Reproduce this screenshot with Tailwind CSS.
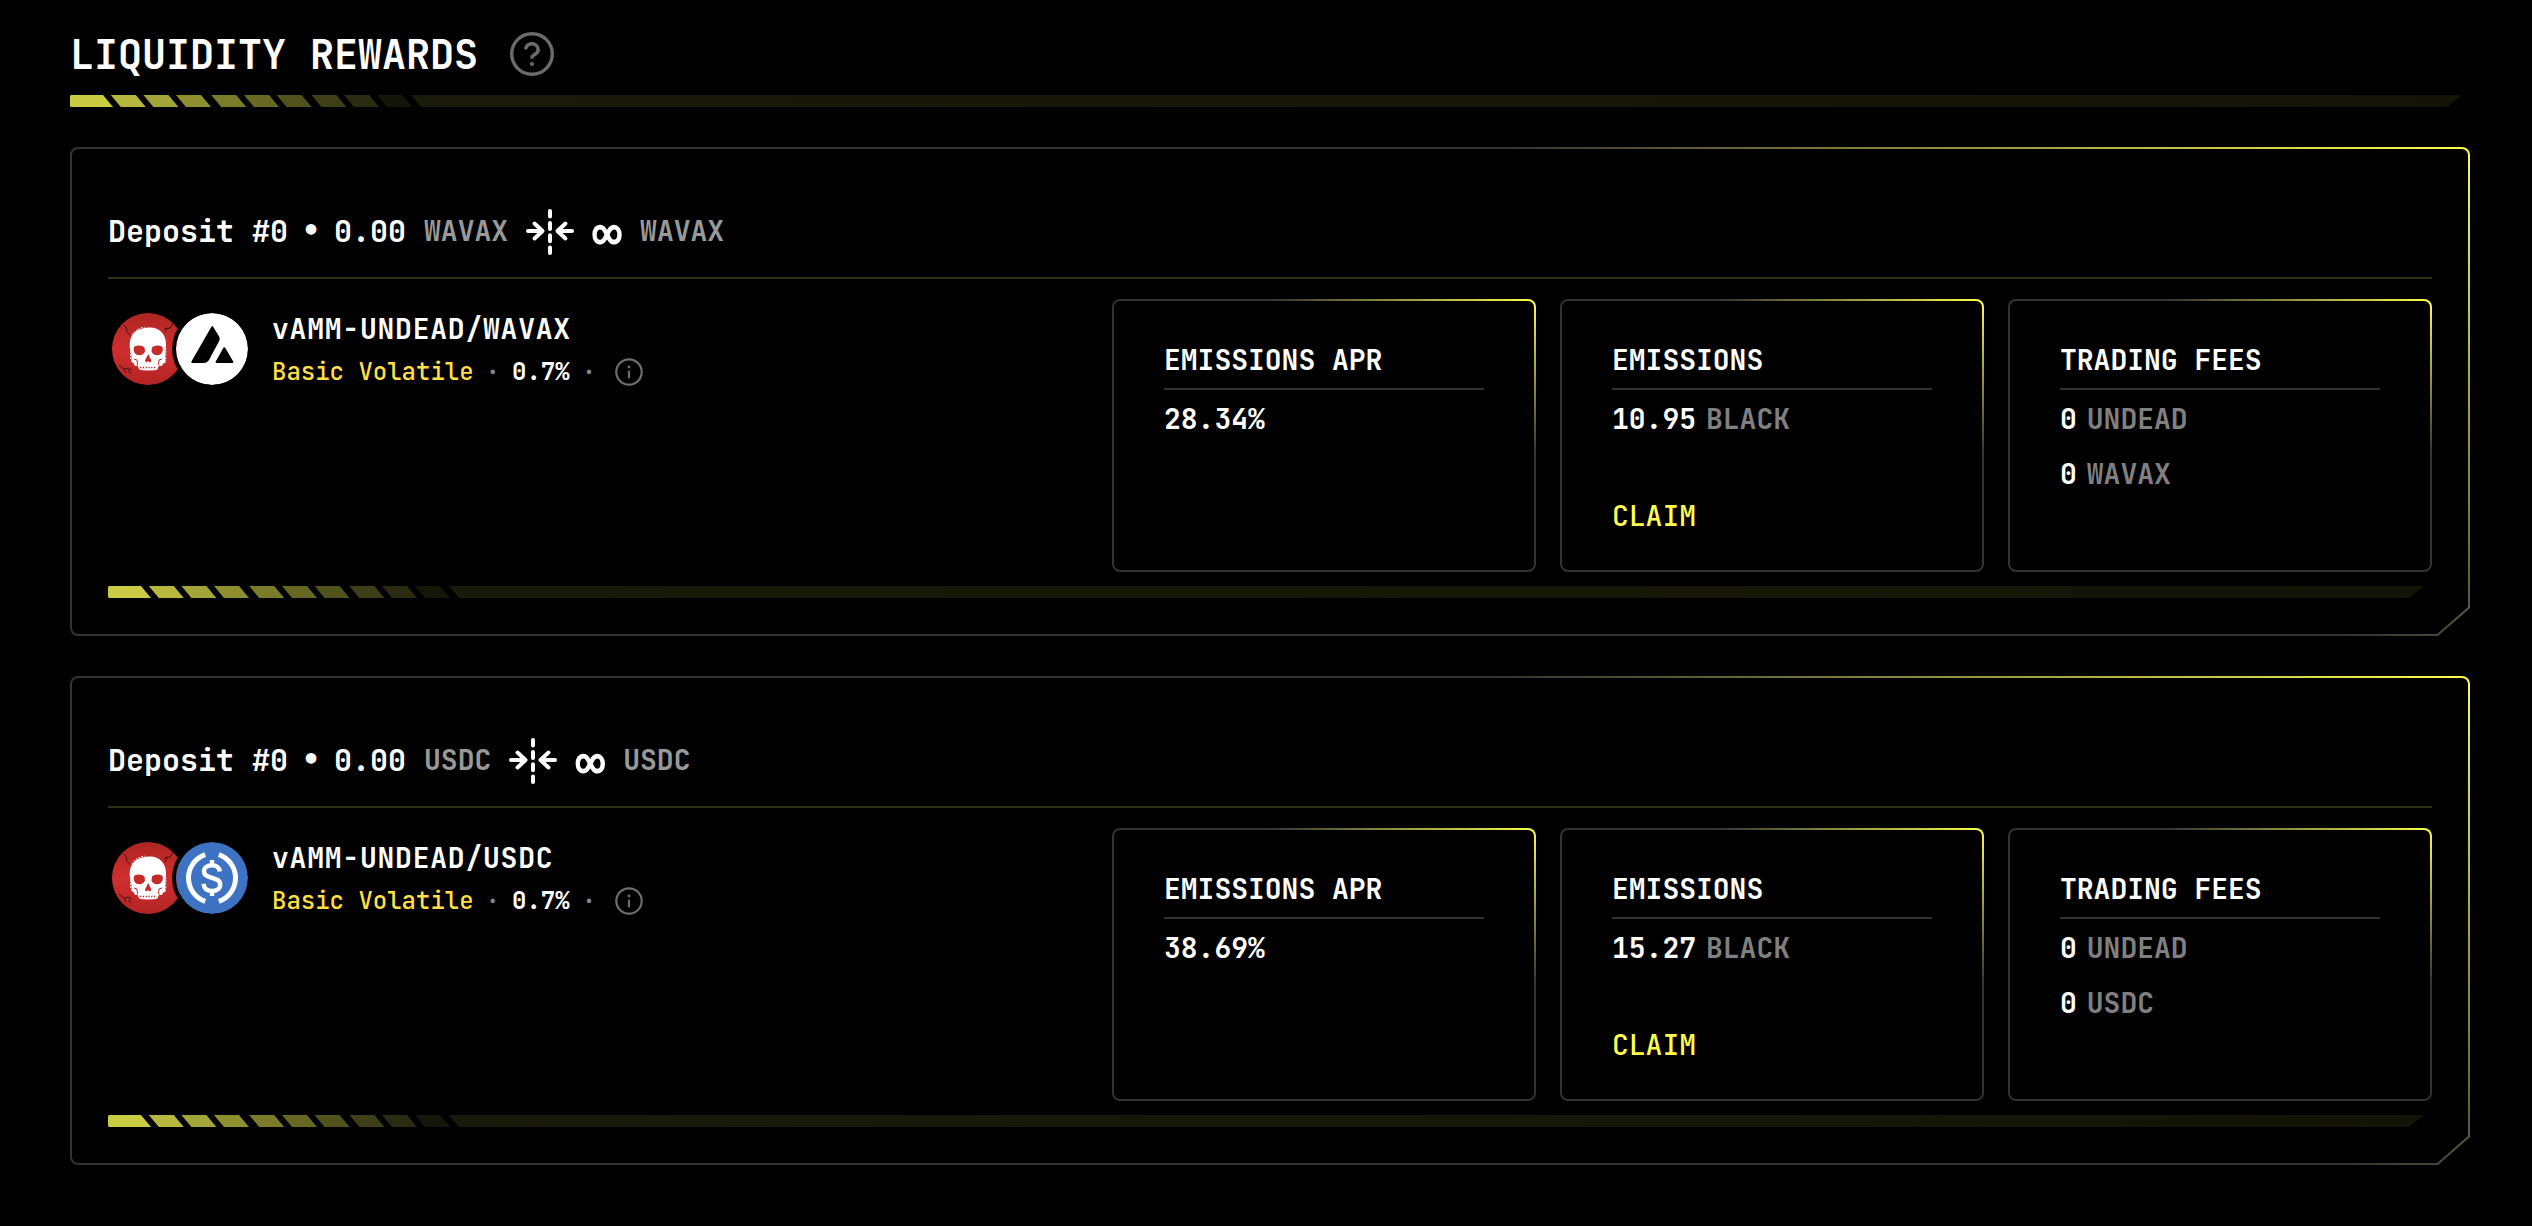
<!DOCTYPE html>
<html lang="en">
<head>
<meta charset="utf-8">
<title>Liquidity Rewards</title>
<script src="https://cdn.jsdelivr.net/npm/@tailwindcss/browser@4"></script>
</head>
<body class="min-h-screen bg-black font-['JetBrains_Mono','DejaVu_Sans_Mono',monospace] text-white">
<svg class="absolute h-0 w-0" aria-hidden="true">
  <defs>
    <linearGradient id="blood" x1="0" y1="0" x2="0" y2="1"><stop offset="0" stop-color="#ad2622"/><stop offset=".5" stop-color="#d12e2e"/><stop offset="1" stop-color="#b32424"/></linearGradient>
    <symbol id="stripes" viewBox="0 0 352 12">
      <path fill="#c9cc43" d="M1 0H33L43 12H1L0 11V1z"/>
      <path fill="#b5b83d" d="M40.8 0h25l10 12h-25z"/>
      <path fill="#a2a537" d="M73.4 0h25l10 12h-25z"/>
      <path fill="#8e9030" d="M106 0h25l10 12h-25z"/>
      <path fill="#7a7c2a" d="M141.2 0h25l10 12h-25z"/>
      <path fill="#666824" d="M174 0h25l10 12h-25z"/>
      <path fill="#52531c" d="M206.6 0h25l10 12h-25z"/>
      <path fill="#3e3f17" d="M241.4 0h25l10 12h-25z"/>
      <path fill="#2a2b10" d="M274 0h25l10 12h-25z"/>
      <path fill="#15160a" d="M307 0h25l10 12h-25z"/>
    </symbol>
    <symbol id="range" viewBox="0 0 48 46">
      <g fill="none" stroke="#fff" stroke-width="4" stroke-linecap="round" stroke-linejoin="round">
        <path d="M24 2v5.500M24 14v6M24 26.300v6M24 38.500v5.500M2 22H16M8.500 14.500L16.500 22L8.500 29.500M46 22H32M39.500 14.500L31.500 22L39.500 29.500"/>
      </g>
    </symbol>
    <symbol id="info" viewBox="0 0 28 28">
      <g fill="none" stroke="#6e6e6e" stroke-width="2.200" stroke-linecap="round"><circle cx="14" cy="14" r="12.700"/><path d="M14 13.500v6"/></g><circle cx="14" cy="9" r="1.400" fill="#6e6e6e"/>
    </symbol>
    <symbol id="skull" viewBox="0 0 72 72">
      <circle cx="36" cy="36" r="36" fill="url(#blood)"/>
      <path d="M12 12l3 4-1 2 4 4M61 10l-2 4-5 3-1 3M56 15l-4 1M7 52l5 4 4-1 4 2M12 56l2 4M16 57l3 4" fill="none" stroke="#4a1213" stroke-width="1"/>
      <path d="M36 14.500C47 13.500 54 21 54 31c0 5-.5 8-.8 12l.5 6.500-2.500 1-1.200 2.500-3-.5-1.500 4-3 .8-6.500.2-6-.2-2.800-.8-1.700-4-2.500.5-1.500-3-2-1V43c-.8-3-2-8-1.800-12C18 21 25 15 36 14.500z" fill="#fff"/>
      <path d="M18.500 46v-10M53.800 46V35M20 22C23 17 27 15 33 14" fill="none" stroke="#f4d6d6" stroke-width="1" stroke-dasharray="2 1"/>
      <path d="M22 34c3-2.200 8-2 10.500.5l.5 4c-1.500 3.500-4 4-7 3.500-3.500-.5-5-4-4-8zM50.500 34c-3-2.200-8-2-10.500.5l-.5 4c1.500 3.500 4 4 7 3.500 3.500-.5 5-4 4-8zM36.200 41l-3.200 6.500 1 2 2.200-1.200 2.200 1.200 1-2z" fill="#c62b2b"/>
      <path d="M28 54.500h16.500" fill="none" stroke="#b02727" stroke-width="1.600" stroke-dasharray="1.200 1.600"/>
      <path d="M22 46l3 1 .5 5M50 46l-3 1-.5 5" fill="none" stroke="#c62b2b" stroke-width="1"/>
    </symbol>
    <symbol id="avax" viewBox="0 0 72 72">
      <circle cx="36" cy="36" r="36" fill="#fff"/>
      <g fill="#000" stroke="#000" stroke-width="2" stroke-linejoin="round"><path d="M36.300 14.200L42.500 24.500Q43 26 42.300 27.500L31.800 47Q30.500 49 28.500 49H16.300z"/><path d="M48.300 35.300L56.400 49H40.600z"/></g>
    </symbol>
    <symbol id="usdc" viewBox="0 0 72 72">
      <circle cx="36" cy="36" r="36" fill="#3e73c4"/>
      <g fill="none" stroke="#fff" stroke-width="5"><path d="M29.200 12.700A24.600 24.600 0 0 0 29.200 59.300M42.800 12.700A24.600 24.600 0 0 1 42.800 59.300"/><path stroke-width="4.400" d="M43.800 29.500c-.5-4-3.800-6.300-7.800-6.300c-4.800 0-8 2.500-8 6.200c0 8.300 16.200 4.400 16.200 13c0 4-3.400 6.500-8.200 6.500c-5 0-8-2.800-8.500-7.200M36 18v5.500M36 48.500V54"/></g>
    </symbol>
  </defs>
</svg>

<main class="flex flex-col px-[62px] pt-[31px] pl-[70px]">
  <header class="flex h-12 items-center gap-8">
    <h1 class="text-[40px] leading-[48px] font-bold">LIQUIDITY REWARDS</h1>
    <svg class="-mt-[2px] size-11" viewBox="0 0 44 44" fill="none" stroke="#6b6b6b" stroke-width="3.400" stroke-linecap="round"><circle cx="22" cy="22" r="20.300"/><path stroke-width="1.700" transform="translate(-3.200 -3) scale(2.100)" d="M9.090 9a3 3 0 0 1 5.830 1c0 2-2.920 2.300-2.920 3.400"/><circle cx="22" cy="32" r="2.100" fill="#6b6b6b" stroke="none"/></svg>
  </header>
  <div class="mt-4 flex h-3 pr-2">
    <svg class="h-3 w-[352px]"><use href="#stripes"/></svg>
    <div class="-ml-[11px] flex-1 bg-linear-to-r from-[#1a1a0b] to-[#131307] [clip-path:polygon(0_0,100%_0,calc(100%-15px)_100%,10px_100%)]"></div>
  </div>

  <section class="mt-10 h-[489px] w-[2400px] rounded-lg bg-[linear-gradient(30deg,#333_70%,#ffff4d_100%)] p-[2px] [clip-path:polygon(0_0,100%_0,100%_calc(100%-28px),calc(100%-32px)_100%,0_100%)]">
    <div class="flex h-full flex-col rounded-[6px] bg-black px-9 pt-[62px] [clip-path:polygon(0_0,100%_0,100%_calc(100%-26.9px),calc(100%-30.8px)_100%,0_100%)]">
      <div class="flex h-[68px] items-start gap-[18px] border-b-2 border-[#2f2f14] text-[28px] leading-10 font-semibold text-[#999]">
        <div class="flex gap-[14px] text-[30px] text-white"><span>Deposit #0</span><span class="font-['DejaVu_Sans_Mono'] font-bold">•</span><span>0.00</span></div>
        <span>WAVAX</span>
        <svg class="-mt-[2px] h-[46px] w-12"><use href="#range"/></svg>
        <span class="mt-[2px] flex w-[30px] justify-center font-['DejaVu_Sans_Mono'] text-[50px] font-normal text-white [-webkit-text-stroke:1.2px_white]">∞</span>
        <span>WAVAX</span>
      </div>
      <div class="mt-5 flex h-[273px] gap-6">
        <div class="flex flex-1 items-start pl-1">
          <svg class="mt-[14px] size-[72px]"><use href="#skull"/></svg>
          <svg class="mt-[14px] -ml-2 size-[72px] rounded-full ring-4 ring-black"><use href="#avax"/></svg>
          <div class="mt-[10px] ml-6">
            <h2 class="text-[28px] leading-10 font-bold tracking-[0.028em]">vAMM-UNDEAD/WAVAX</h2>
            <div class="mt-[7px] flex items-center gap-3 text-2xl font-medium"><span class="text-[#ffdf43]">Basic Volatile</span><span class="text-[#888]">·</span><span class="font-semibold">0.7%</span><span class="text-[#888]">·</span><svg class="ml-[7px] size-7"><use href="#info"/></svg></div>
          </div>
        </div>
        <div class="w-[424px] rounded-lg bg-[linear-gradient(30deg,#333_70%,#ffff4d_100%)] p-[2px]">
          <div class="h-full rounded-[6px] bg-black px-[50px] pt-[39px] text-[28px] leading-10 font-bold">
            <h3 class="border-b-2 border-[#333] pb-2 font-semibold">EMISSIONS APR</h3>
            <p class="mt-[9px]">28.34%</p>
          </div>
        </div>
        <div class="w-[424px] rounded-lg bg-[linear-gradient(30deg,#333_70%,#ffff4d_100%)] p-[2px]">
          <div class="h-full rounded-[6px] bg-black px-[50px] pt-[39px] text-[28px] leading-10 font-bold">
            <h3 class="border-b-2 border-[#333] pb-2 font-semibold">EMISSIONS</h3>
            <p class="mt-[9px] flex gap-[10px]">10.95<span class="text-[#808080]">BLACK</span></p>
            <button class="mt-[57px] block font-medium text-[#ffff4d]">CLAIM</button>
          </div>
        </div>
        <div class="w-[424px] rounded-lg bg-[linear-gradient(30deg,#333_70%,#ffff4d_100%)] p-[2px]">
          <div class="h-full rounded-[6px] bg-black px-[50px] pt-[39px] text-[28px] leading-10 font-bold">
            <h3 class="border-b-2 border-[#333] pb-2 font-semibold">TRADING FEES</h3>
            <p class="mt-[9px] flex gap-[10px]">0<span class="text-[#808080]">UNDEAD</span></p>
            <p class="mt-[15px] flex gap-[10px]">0<span class="text-[#808080]">WAVAX</span></p>
          </div>
        </div>
      </div>
      <div class="mt-[14px] flex h-3 pr-2">
        <svg class="h-3 w-[352px]"><use href="#stripes"/></svg>
        <div class="-ml-[11px] flex-1 bg-linear-to-r from-[#1a1a0b] to-[#131307] [clip-path:polygon(0_0,100%_0,calc(100%-15px)_100%,10px_100%)]"></div>
      </div>
    </div>
  </section>

  <section class="mt-10 h-[489px] w-[2400px] rounded-lg bg-[linear-gradient(30deg,#333_70%,#ffff4d_100%)] p-[2px] [clip-path:polygon(0_0,100%_0,100%_calc(100%-28px),calc(100%-32px)_100%,0_100%)]">
    <div class="flex h-full flex-col rounded-[6px] bg-black px-9 pt-[62px] [clip-path:polygon(0_0,100%_0,100%_calc(100%-26.9px),calc(100%-30.8px)_100%,0_100%)]">
      <div class="flex h-[68px] items-start gap-[18px] border-b-2 border-[#2f2f14] text-[28px] leading-10 font-semibold text-[#999]">
        <div class="flex gap-[14px] text-[30px] text-white"><span>Deposit #0</span><span class="font-['DejaVu_Sans_Mono'] font-bold">•</span><span>0.00</span></div>
        <span>USDC</span>
        <svg class="-mt-[2px] h-[46px] w-12"><use href="#range"/></svg>
        <span class="mt-[2px] flex w-[30px] justify-center font-['DejaVu_Sans_Mono'] text-[50px] font-normal text-white [-webkit-text-stroke:1.2px_white]">∞</span>
        <span>USDC</span>
      </div>
      <div class="mt-5 flex h-[273px] gap-6">
        <div class="flex flex-1 items-start pl-1">
          <svg class="mt-[14px] size-[72px]"><use href="#skull"/></svg>
          <svg class="mt-[14px] -ml-2 size-[72px] rounded-full ring-4 ring-black"><use href="#usdc"/></svg>
          <div class="mt-[10px] ml-6">
            <h2 class="text-[28px] leading-10 font-bold tracking-[0.028em]">vAMM-UNDEAD/USDC</h2>
            <div class="mt-[7px] flex items-center gap-3 text-2xl font-medium"><span class="text-[#ffdf43]">Basic Volatile</span><span class="text-[#888]">·</span><span class="font-semibold">0.7%</span><span class="text-[#888]">·</span><svg class="ml-[7px] size-7"><use href="#info"/></svg></div>
          </div>
        </div>
        <div class="w-[424px] rounded-lg bg-[linear-gradient(30deg,#333_70%,#ffff4d_100%)] p-[2px]">
          <div class="h-full rounded-[6px] bg-black px-[50px] pt-[39px] text-[28px] leading-10 font-bold">
            <h3 class="border-b-2 border-[#333] pb-2 font-semibold">EMISSIONS APR</h3>
            <p class="mt-[9px]">38.69%</p>
          </div>
        </div>
        <div class="w-[424px] rounded-lg bg-[linear-gradient(30deg,#333_70%,#ffff4d_100%)] p-[2px]">
          <div class="h-full rounded-[6px] bg-black px-[50px] pt-[39px] text-[28px] leading-10 font-bold">
            <h3 class="border-b-2 border-[#333] pb-2 font-semibold">EMISSIONS</h3>
            <p class="mt-[9px] flex gap-[10px]">15.27<span class="text-[#808080]">BLACK</span></p>
            <button class="mt-[57px] block font-medium text-[#ffff4d]">CLAIM</button>
          </div>
        </div>
        <div class="w-[424px] rounded-lg bg-[linear-gradient(30deg,#333_70%,#ffff4d_100%)] p-[2px]">
          <div class="h-full rounded-[6px] bg-black px-[50px] pt-[39px] text-[28px] leading-10 font-bold">
            <h3 class="border-b-2 border-[#333] pb-2 font-semibold">TRADING FEES</h3>
            <p class="mt-[9px] flex gap-[10px]">0<span class="text-[#808080]">UNDEAD</span></p>
            <p class="mt-[15px] flex gap-[10px]">0<span class="text-[#808080]">USDC</span></p>
          </div>
        </div>
      </div>
      <div class="mt-[14px] flex h-3 pr-2">
        <svg class="h-3 w-[352px]"><use href="#stripes"/></svg>
        <div class="-ml-[11px] flex-1 bg-linear-to-r from-[#1a1a0b] to-[#131307] [clip-path:polygon(0_0,100%_0,calc(100%-15px)_100%,10px_100%)]"></div>
      </div>
    </div>
  </section>
</main>
</body>
</html>
